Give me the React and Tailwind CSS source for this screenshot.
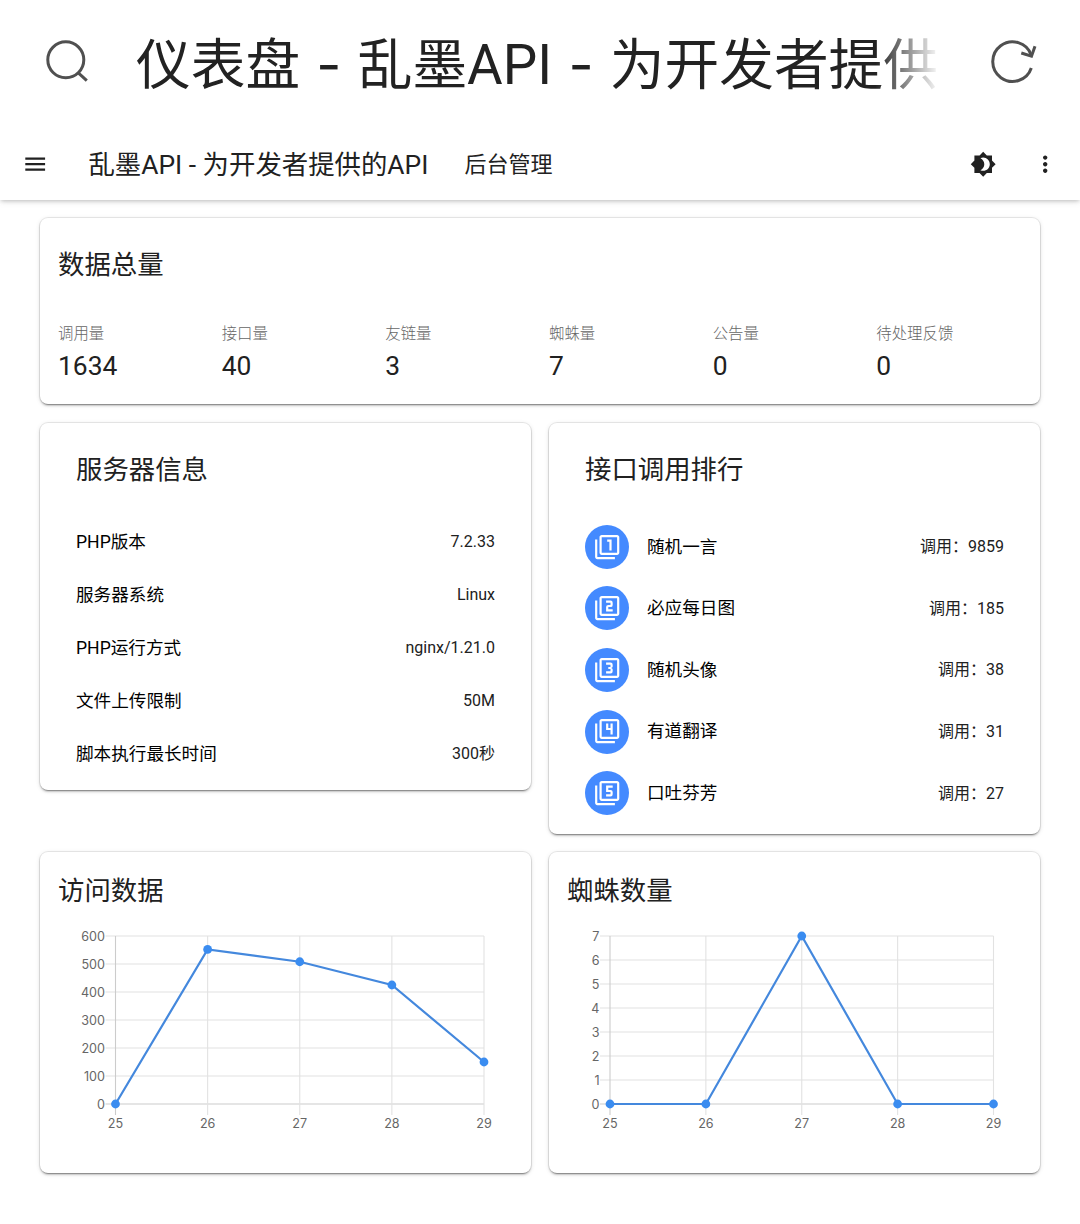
import {
  MdBrightness4,
  MdFilter1,
  MdFilter2,
  MdFilter3,
  MdFilter4,
  MdFilter5,
  MdMenu,
  MdMoreVert,
} from 'react-icons/md';

const totals = [
  { label: '调用量', value: 1634 },
  { label: '接口量', value: 40 },
  { label: '友链量', value: 3 },
  { label: '蜘蛛量', value: 7 },
  { label: '公告量', value: 0 },
  { label: '待处理反馈', value: 0 },
];

const serverInfo = [
  { name: 'PHP版本', value: '7.2.33' },
  { name: '服务器系统', value: 'Linux' },
  { name: 'PHP运行方式', value: 'nginx/1.21.0' },
  { name: '文件上传限制', value: '50M' },
  { name: '脚本执行最长时间', value: '300秒' },
];

const ranking = [
  { icon: MdFilter1, name: '随机一言', count: 9859 },
  { icon: MdFilter2, name: '必应每日图', count: 185 },
  { icon: MdFilter3, name: '随机头像', count: 38 },
  { icon: MdFilter4, name: '有道翻译', count: 31 },
  { icon: MdFilter5, name: '口吐芬芳', count: 27 },
];

const days = [25, 26, 27, 28, 29];

const Card = ({ className = '', children }) => (
  <div
    className={`rounded-lg bg-white shadow-[0_3px_1px_-2px_rgba(0,0,0,0.25),0_2px_2px_0_rgba(0,0,0,0.16),0_1px_5px_0_rgba(0,0,0,0.12),0_0_0_1px_rgba(0,0,0,0.08)] ${className}`}
  >
    {children}
  </div>
);

const LineChart = ({ values, max, step, left, right }) => {
  const top = 17;
  const bottom = 185;
  const x = (i) => left + (i * (right - left)) / (days.length - 1);
  const y = (v) => bottom - (v / max) * (bottom - top);
  const ticks = [];
  for (let v = 0; v <= max; v += step) ticks.push(v);

  return (
    <svg
      className="block h-[220px] w-[490px] font-['Inter','Noto_Sans',sans-serif] text-[12.6px]"
      viewBox="0 0 490 220"
    >
      {ticks.map((v) => (
        <g key={v}>
          <line
            x1={left - 10}
            x2={right}
            y1={y(v)}
            y2={y(v)}
            stroke={v === 0 ? '#cccccc' : '#e2e2e2'}
            strokeWidth="1.1"
          />
          <text x={left - 10.5} y={y(v) + 4.6} textAnchor="end" fill="#666">
            {v}
          </text>
        </g>
      ))}
      {days.map((day, i) => (
        <g key={day}>
          <line
            x1={x(i)}
            x2={x(i)}
            y1={top}
            y2={bottom + 11}
            stroke={i === 0 ? '#cccccc' : '#e2e2e2'}
            strokeWidth="1.1"
          />
          <text x={x(i)} y={bottom + 23.5} textAnchor="middle" fill="#666">
            {day}
          </text>
        </g>
      ))}
      <polyline
        points={values.map((v, i) => `${x(i)},${y(v)}`).join(' ')}
        fill="none"
        stroke="#4488dd"
        strokeWidth="2.2"
      />
      {values.map((v, i) => (
        <circle key={i} cx={x(i)} cy={y(v)} r="4.4" fill="#3a8cf0" />
      ))}
    </svg>
  );
};

const Dash = () => <span className="font-['Inter']">-</span>;

const BrowserBar = () => (
  <header className="flex h-32 items-center">
    <svg className="ml-11 h-12 w-12 shrink-0" viewBox="0 0 48 48" fill="none" stroke="#505050" strokeWidth="3">
      <circle cx="21.8" cy="19.8" r="18" />
      <path d="M34.3 32.8 42.8 40.6" />
    </svg>
    <div className="ml-11 w-[804px] pt-px text-[54.7px] leading-[80px] [word-spacing:2.7px] whitespace-nowrap text-[#222] [mask-image:linear-gradient(to_right,black_92%,transparent_100%)]">
      仪表盘 <Dash /> 乱墨API <Dash /> 为开发者提供
    </div>
    <svg
      className="ml-12 h-12 w-12 shrink-0 overflow-visible"
      viewBox="0 0 48 48"
      fill="none"
      stroke="#505050"
      strokeWidth="3"
    >
      <path d="M43.3 28A19.8 19.8 0 1 1 43.2 15" />
      <path d="M33.3 13 43.5 16.2 47 6.2" />
    </svg>
  </header>
);

const AppBar = () => (
  <nav className="flex h-[72px] items-center text-[#212121] shadow-[0_2px_4px_-1px_rgba(0,0,0,0.2),0_1px_8px_rgba(0,0,0,0.1)] [clip-path:inset(0_0_-12px_0)]">
    <MdMenu className="ml-[22px] text-[26.4px]" />
    <div className="ml-10 pt-px text-[26.4px] leading-9 whitespace-nowrap">乱墨API - 为开发者提供的API</div>
    <div className="ml-9 pt-px text-[22px] leading-9">后台管理</div>
    <MdBrightness4 className="ml-auto text-[26.4px]" />
    <MdMoreVert className="mr-[22px] ml-[35px] text-[26.4px]" />
  </nav>
);

const App = () => {
  return (
    <div className="h-[1224px] bg-white font-['Roboto','Noto_Sans_CJK_SC',sans-serif] text-[#212121]">
      <BrowserBar />
      <AppBar />

      <main className="flex flex-col gap-[18px] px-10 pt-[18px]">
        <Card className="mb-px h-[186px] px-[18px] pt-[29px]">
          <h2 className="text-[26.4px] leading-9">数据总量</h2>
          <div className="mt-[39px] grid grid-cols-6 gap-x-[18px]">
            {totals.map((item) => (
              <div key={item.label}>
                <div className="text-[15.4px] leading-6 font-light text-[#666]">{item.label}</div>
                <div className="mt-0.5 text-[26.4px] leading-9">{item.value}</div>
              </div>
            ))}
          </div>
        </Card>

        <div className="grid grid-cols-2 items-start gap-x-[18px]">
          <Card className="h-[367px] px-9 pt-[29px]">
            <h2 className="text-[26.4px] leading-9">服务器信息</h2>
            <div className="mt-7">
              {serverInfo.map((item) => (
                <div key={item.name} className="flex h-[53px] items-center justify-between text-black">
                  <span className="text-[17.6px]">{item.name}</span>
                  <span className="pb-0.5 text-base text-[#212121]">{item.value}</span>
                </div>
              ))}
            </div>
          </Card>

          <Card className="h-[411px] px-9 pt-[29px]">
            <h2 className="text-[26.4px] leading-9">接口调用排行</h2>
            <div className="mt-7">
              {ranking.map(({ icon: Icon, name, count }) => (
                <div key={name} className="flex h-[61.6px] items-center text-black">
                  <div className="flex size-11 items-center justify-center rounded-full bg-[#448aff] text-white">
                    <Icon className="text-[26.4px]" />
                  </div>
                  <span className="ml-[18px] text-[17.6px]">{name}</span>
                  <span className="ml-auto pt-px text-base text-[#212121]">调用：{count}</span>
                </div>
              ))}
            </div>
          </Card>
        </div>

        <div className="grid grid-cols-2 gap-x-[18px]">
          <Card className="h-[321px] pt-[21px]">
            <h2 className="px-[18px] text-[26.4px] leading-9">访问数据</h2>
            <div className="mt-[10px]">
              <LineChart values={[0, 552, 508, 425, 150]} max={600} step={100} left={75.5} right={444} />
            </div>
          </Card>
          <Card className="h-[321px] pt-[21px]">
            <h2 className="px-[18px] text-[26.4px] leading-9">蜘蛛数量</h2>
            <div className="mt-[10px]">
              <LineChart values={[0, 0, 7, 0, 0]} max={7} step={1} left={61} right={444.5} />
            </div>
          </Card>
        </div>
      </main>
    </div>
  );
};

export default App;
